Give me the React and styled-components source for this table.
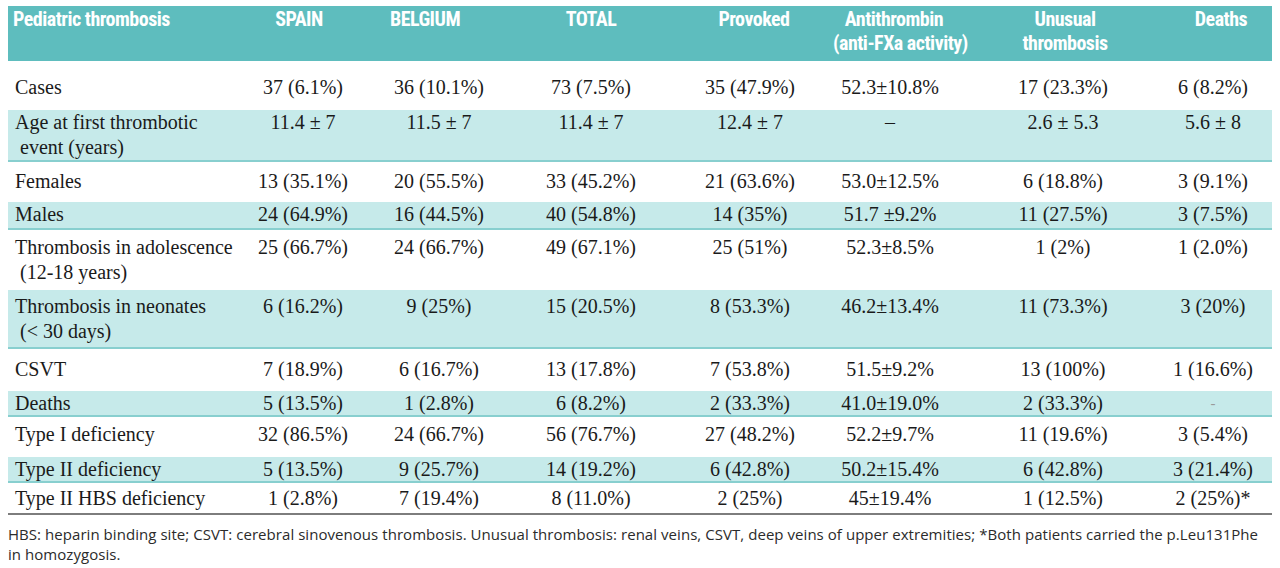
import React from "react";
import styled, { createGlobalStyle, css } from "styled-components";

const GlobalStyle = createGlobalStyle`
  body {
    margin: 0;
    background: #fff;
  }
`;

const COLS = "227px 136px 136px 168px 150px 130px 216px 84px";

const Page = styled.div`
  padding: 6px 8px 0 8px;
  width: 1264px;
`;

const Table = styled.div`
  width: 1264px;
`;

const HeadRow = styled.div`
  display: grid;
  grid-template-columns: ${COLS};
  height: 55px;
  padding-top: 1px;
  box-sizing: border-box;
  background: #5ebdbe;
`;

const HeadCell = styled.div`
  font-family: "Liberation Sans Narrow", "Roboto Condensed", "Liberation Sans", sans-serif;
  font-stretch: condensed;
  font-weight: bold;
  font-size: 20px;
  line-height: 24px;
  color: #fff;
  letter-spacing: -0.5px;
  white-space: nowrap;
  text-align: ${({ $left }) => ($left ? "left" : "center")};
  padding-left: ${({ $left, $shift }) =>
    $left ? 5 : $shift > 0 ? $shift * 2 : 0}px;
  padding-right: ${({ $shift }) => ($shift < 0 ? -$shift * 2 : 0)}px;
`;

const Row = styled.div`
  display: grid;
  grid-template-columns: ${COLS};
  box-sizing: border-box;
  height: ${({ $h }) => $h}px;
  padding-top: ${({ $pt }) => $pt}px;
  background: #fff;

  ${({ $shade }) =>
    $shade &&
    css`
      background: #c6eaea;
      border-bottom: 2px solid #88cfcf;
    `};

  ${({ $last }) =>
    $last &&
    css`
      border-bottom: 2px solid #7d7d7d;
    `};
`;

const Cell = styled.div`
  font-family: "Liberation Serif", serif;
  font-size: 20px;
  line-height: 25px;
  color: #1a1a1a;
  text-align: center;
  white-space: nowrap;

  ${({ $muted }) =>
    $muted &&
    css`
      color: #9a9a9a;
      font-size: 15px;
    `};
`;

const Label = styled(Cell)`
  text-align: left;
  padding-left: 7px;
`;

const LabelMore = styled.div`
  padding-left: 5px;
`;

const Note = styled.div`
  font-family: "Open Sans", "Liberation Sans", sans-serif;
  font-size: 15px;
  line-height: 20px;
  color: #2b2b2b;
  letter-spacing: 0.05px;
  padding-top: 9px;
  white-space: nowrap;
`;

const headers = [
  { lines: ["Pediatric thrombosis"], shift: 0 },
  { lines: ["SPAIN"], shift: -4 },
  { lines: ["BELGIUM"], shift: -14 },
  { lines: ["TOTAL"], shift: 0 },
  { lines: ["Provoked"], shift: 4 },
  { lines: ["Antithrombin", "(anti-FXa activity)"], shift: 4 },
  { lines: ["Unusual", "thrombosis"], shift: 2 },
  { lines: ["Deaths"], shift: 8 }
];

const rows = [
  { label: ["Cases"], h: 49, pt: 14, v: ["37 (6.1%)", "36 (10.1%)", "73 (7.5%)", "35 (47.9%)", "52.3±10.8%", "17 (23.3%)", "6 (8.2%)"] },
  { label: ["Age at first thrombotic", "event (years)"], shade: true, h: 52, pt: 0, v: ["11.4 ± 7", "11.5 ± 7", "11.4 ± 7", "12.4 ± 7", "–", "2.6 ± 5.3", "5.6 ± 8"] },
  { label: ["Females"], h: 40, pt: 7, v: ["13 (35.1%)", "20 (55.5%)", "33 (45.2%)", "21 (63.6%)", "53.0±12.5%", "6 (18.8%)", "3 (9.1%)"] },
  { label: ["Males"], shade: true, h: 28, pt: 0, v: ["24 (64.9%)", "16 (44.5%)", "40 (54.8%)", "14 (35%)", "51.7 ±9.2%", "11 (27.5%)", "3 (7.5%)"] },
  { label: ["Thrombosis in adolescence", "(12-18 years)"], h: 60, pt: 5, v: ["25 (66.7%)", "24 (66.7%)", "49 (67.1%)", "25 (51%)", "52.3±8.5%", "1 (2%)", "1 (2.0%)"] },
  { label: ["Thrombosis in neonates", "(< 30 days)"], shade: true, h: 59, pt: 4, v: ["6 (16.2%)", "9 (25%)", "15 (20.5%)", "8 (53.3%)", "46.2±13.4%", "11 (73.3%)", "3 (20%)"] },
  { label: ["CSVT"], h: 42, pt: 8, v: ["7 (18.9%)", "6 (16.7%)", "13 (17.8%)", "7 (53.8%)", "51.5±9.2%", "13 (100%)", "1 (16.6%)"] },
  { label: ["Deaths"], shade: true, h: 26, pt: 0, v: ["5 (13.5%)", "1 (2.8%)", "6 (8.2%)", "2 (33.3%)", "41.0±19.0%", "2 (33.3%)", "-"] },
  { label: ["Type I deficiency"], h: 40, pt: 5, v: ["32 (86.5%)", "24 (66.7%)", "56 (76.7%)", "27 (48.2%)", "52.2±9.7%", "11 (19.6%)", "3 (5.4%)"] },
  { label: ["Type II deficiency"], shade: true, h: 26, pt: 0, v: ["5 (13.5%)", "9 (25.7%)", "14 (19.2%)", "6 (42.8%)", "50.2±15.4%", "6 (42.8%)", "3 (21.4%)"] },
  { label: ["Type II HBS deficiency"], last: true, h: 32, pt: 3, v: ["1 (2.8%)", "7 (19.4%)", "8 (11.0%)", "2 (25%)", "45±19.4%", "1 (12.5%)", "2 (25%)*"] }
];

export default function App() {
  return (
    <Page>
      <GlobalStyle />
      <Table>
        <HeadRow>
          {headers.map((h, i) => (
            <HeadCell key={i} $left={i === 0} $shift={h.shift}>
              {h.lines.map(l => (
                <div key={l}>{l}</div>
              ))}
            </HeadCell>
          ))}
        </HeadRow>
        {rows.map(row => (
          <Row
            key={row.label[0]}
            $h={row.h}
            $pt={row.pt}
            $shade={row.shade}
            $last={row.last}
          >
            <Label>
              <div>{row.label[0]}</div>
              {row.label[1] && <LabelMore>{row.label[1]}</LabelMore>}
            </Label>
            {row.v.map((val, i) => (
              <Cell key={i} $muted={val === "-"}>
                {val}
              </Cell>
            ))}
          </Row>
        ))}
      </Table>
      <Note>
        HBS: heparin binding site; CSVT: cerebral sinovenous thrombosis. Unusual
        thrombosis: renal veins, CSVT, deep veins of upper extremities; *Both
        patients carried the p.Leu131Phe
        <br />
        in homozygosis.
      </Note>
    </Page>
  );
}
